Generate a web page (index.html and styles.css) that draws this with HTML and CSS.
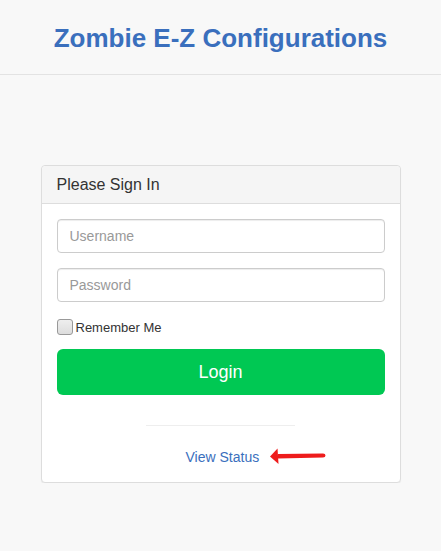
FILE: index.html
```html
<!DOCTYPE html>
<html>
<head>
<meta charset="utf-8">
<link rel="stylesheet" href="styles.css">
</head>
<body>
<header class="top">
  <h1 class="title">Zombie E-Z Configurations</h1>
</header>
<main class="wrap">
  <div class="panel">
    <div class="panel-heading">Please Sign In</div>
    <div class="panel-body">
      <input class="field" type="text" placeholder="Username">
      <input class="field" type="password" placeholder="Password">
      <label class="remember"><span class="box"></span>Remember Me</label>
      <button class="login">Login</button>
      <hr class="sep">
      <div class="status-row">
        <a class="status" href="#">View Status</a>
        <svg class="arrow" width="58" height="18" viewBox="0 0 58 18">
          <path d="M9 7 L54 6.5 Q56.5 6.5 56.5 8.5 Q56.5 10.5 54 10.5 L9 11.5 Z" fill="#ee1c1c"/>
          <path d="M1 9.5 L8.5 1.5 L9.5 17 Z" fill="#ee1c1c"/>
        </svg>
      </div>
    </div>
  </div>
</main>
</body>
</html>
```
FILE: styles.css
```css
html, body {
  margin: 0;
  padding: 0;
  background: #f8f8f8;
  font-family: "Liberation Sans", Arial, sans-serif;
  color: #333;
}
.top {
  height: 74px;
  border-bottom: 1px solid #e3e3e3;
  display: flex;
  align-items: center;
  justify-content: center;
}
.title {
  margin: 0;
  padding-top: 3px;
  font-size: 26px;
  font-weight: bold;
  color: #3a6fbd;
}
.wrap {
  display: flex;
  justify-content: center;
  padding-top: 90px;
}
.panel {
  width: 358px;
  background: #fff;
  border: 1px solid #ddd;
  border-radius: 4px;
  box-shadow: 0 1px 1px rgba(0,0,0,.06);
}
.panel-heading {
  height: 38px;
  box-sizing: border-box;
  padding: 10px 15px 0;
  background: #f5f5f5;
  border-bottom: 1px solid #ddd;
  border-radius: 4px 4px 0 0;
  font-size: 16px;
  line-height: 18px;
  color: #333;
}
.panel-body {
  padding: 15px 15px 15px;
  display: flex;
  flex-direction: column;
}
.field {
  height: 34px;
  box-sizing: border-box;
  border: 1px solid #ccc;
  border-radius: 4px;
  padding: 6px 12px;
  font-family: "Liberation Sans", Arial, sans-serif;
  font-size: 14px;
  color: #555;
  margin: 0 0 15px;
  box-shadow: inset 0 1px 1px rgba(0,0,0,.075);
}
.field::placeholder { color: #999; }
.remember {
  display: flex;
  align-items: center;
  font-size: 13px;
  color: #333;
  height: 18px;
  margin-top: 1px;
}
.box {
  width: 16px;
  height: 16px;
  box-sizing: border-box;
  border: 1px solid #999;
  border-radius: 3px;
  background: linear-gradient(#eee, #ddd);
  margin-right: 3px;
}
.login {
  margin-top: 13px;
  height: 46px;
  border: none;
  border-radius: 6px;
  background: #00c853;
  color: #fff;
  font-family: "Liberation Sans", Arial, sans-serif;
  font-size: 18px;
}
.sep {
  width: 149px;
  margin: 30px auto 0;
  border: 0;
  border-top: 1px solid #eee;
}
.status-row {
  display: flex;
  align-items: center;
  margin-top: 21px;
  padding-left: 129px;
  height: 20px;
}
.status {
  color: #3a6fbd;
  text-decoration: none;
  font-size: 14px;
}
.arrow {
  margin-left: 10px;
  margin-top: -2px;
}
```
